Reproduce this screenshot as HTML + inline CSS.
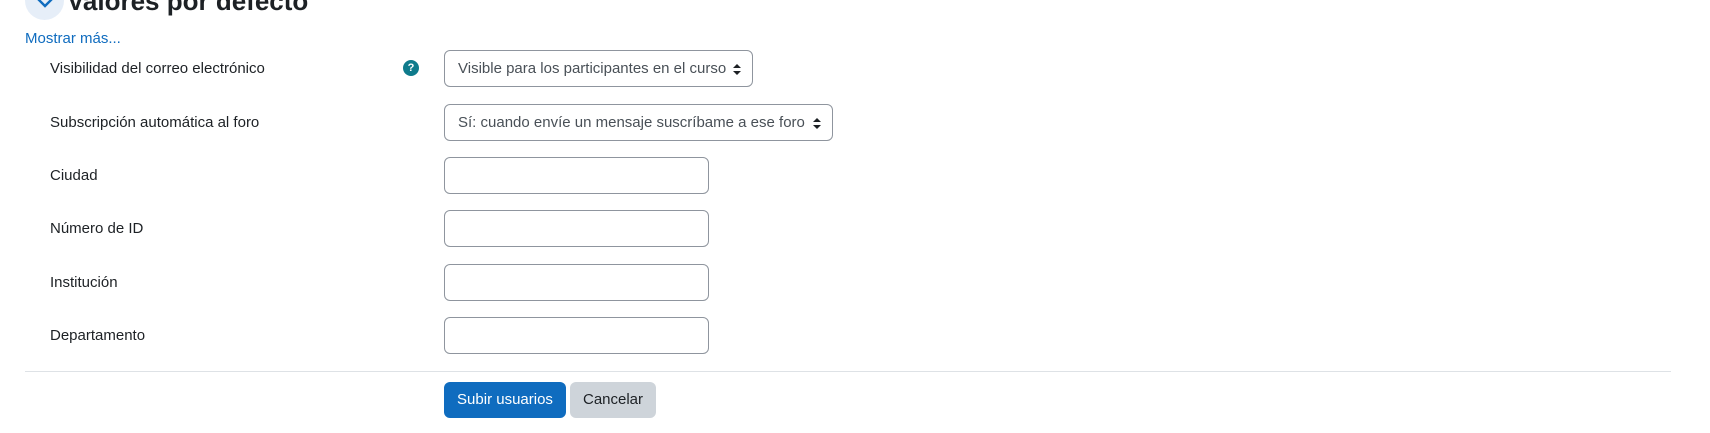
<!DOCTYPE html>
<html><head><meta charset="utf-8"><style>
body{margin:0;width:1710px;height:433px;background:#fff;font-family:"Liberation Sans",sans-serif;color:#1d2125;position:relative;overflow:hidden}
.a{position:absolute}
.lbl{position:absolute;left:50px;font-size:15px;line-height:20px;white-space:nowrap}
.sel{position:absolute;left:444px;border:1px solid #8f959e;border-radius:6px;box-sizing:border-box;font-size:15px;color:#495057;line-height:35px;padding-left:13px;height:37px;white-space:nowrap}
.sel svg{position:absolute;right:11px;top:13px}
.inp{position:absolute;left:444px;width:265px;height:37px;border:1px solid #8f959e;border-radius:6px;box-sizing:border-box}
</style></head><body>
<div class="a" style="left:25px;top:-19px;width:39px;height:39px;border-radius:50%;background:#e6eef8"></div>
<svg class="a" style="left:36px;top:-2px" width="18" height="11"><path d="M2 1l7 7 7-7" stroke="#0f6cbf" stroke-width="2.4" fill="none"/></svg>
<div class="a" style="left:67px;top:-15px;font-size:26px;font-weight:bold;line-height:32px;white-space:nowrap">Valores por defecto</div>
<div class="a" style="left:25px;top:30px;font-size:15px;color:#0f6cbf;line-height:18px">Mostrar más...</div>
<div class="lbl" style="top:59px">Visibilidad del correo electrónico</div>
<div class="a" style="left:403px;top:60px;width:16px;height:16px;border-radius:50%;background:#0f7b8c;color:#fff;font-size:11px;font-weight:bold;text-align:center;line-height:16px">?</div>
<div class="sel" style="top:50px;width:309px">Visible para los participantes en el curso<svg width="8" height="11"><path d="M4 0L8 4H0zM4 11L0 7h8z" fill="#1d2125"/></svg></div>
<div class="lbl" style="top:113px">Subscripción automática al foro</div>
<div class="sel" style="top:104px;width:389px">Sí: cuando envíe un mensaje suscríbame a ese foro<svg width="8" height="11"><path d="M4 0L8 4H0zM4 11L0 7h8z" fill="#1d2125"/></svg></div>
<div class="lbl" style="top:166px">Ciudad</div><div class="inp" style="top:157px"></div>
<div class="lbl" style="top:219px">Número de ID</div><div class="inp" style="top:210px"></div>
<div class="lbl" style="top:273px">Institución</div><div class="inp" style="top:264px"></div>
<div class="lbl" style="top:326px">Departamento</div><div class="inp" style="top:317px"></div>
<div class="a" style="left:25px;top:371px;width:1646px;height:1px;background:#dee2e6"></div>
<div class="a" style="left:444px;top:382px;width:122px;height:36px;border-radius:6px;background:#0f6cbf;color:#fff;font-size:15px;line-height:36px;text-align:center">Subir usuarios</div>
<div class="a" style="left:570px;top:382px;width:86px;height:36px;border-radius:6px;background:#ced4da;color:#1d2125;font-size:15px;line-height:36px;text-align:center">Cancelar</div>
</body></html>
